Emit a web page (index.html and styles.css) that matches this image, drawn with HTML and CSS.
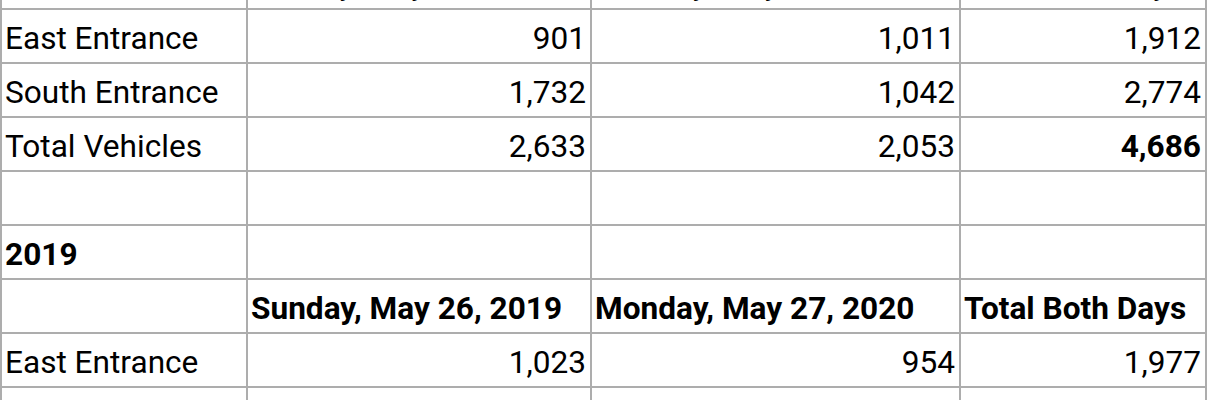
FILE: index.html
```html
<!DOCTYPE html>
<html lang="en">
<head>
<meta charset="utf-8">
<title>Vehicle counts</title>
<link rel="stylesheet" href="styles.css">
</head>
<body>
<div class="sheet">
  <div class="cell"></div>
  <div class="cell head">Sunday, May 24, 2020</div>
  <div class="cell head">Monday, May 25, 2020</div>
  <div class="cell head">Total Both Days</div>

  <div class="cell">East Entrance</div>
  <div class="cell num">901</div>
  <div class="cell num">1,011</div>
  <div class="cell num">1,912</div>

  <div class="cell">South Entrance</div>
  <div class="cell num">1,732</div>
  <div class="cell num">1,042</div>
  <div class="cell num">2,774</div>

  <div class="cell">Total Vehicles</div>
  <div class="cell num">2,633</div>
  <div class="cell num">2,053</div>
  <div class="cell num bold">4,686</div>

  <div class="cell"></div>
  <div class="cell"></div>
  <div class="cell"></div>
  <div class="cell"></div>

  <div class="cell bold">2019</div>
  <div class="cell"></div>
  <div class="cell"></div>
  <div class="cell"></div>

  <div class="cell"></div>
  <div class="cell bold">Sunday, May 26, 2019</div>
  <div class="cell bold">Monday, May 27, 2020</div>
  <div class="cell bold">Total Both Days</div>

  <div class="cell">East Entrance</div>
  <div class="cell num">1,023</div>
  <div class="cell num">954</div>
  <div class="cell num">1,977</div>

  <div class="cell">South Entrance</div>
  <div class="cell num">1,611</div>
  <div class="cell num">1,002</div>
  <div class="cell num">2,613</div>
</div>
</body>
</html>
```
FILE: styles.css
```css
html, body {
  margin: 0;
  padding: 0;
  background: #ffffff;
  overflow: hidden;
}

.sheet {
  display: grid;
  grid-template-columns: 244px 342px 367px 244px;
  grid-auto-rows: 52px;
  gap: 2px;
  padding: 2px;
  background: #adadad;
  width: max-content;
  margin-top: -46px;
  font-family: Roboto, "Noto Sans", sans-serif;
  font-size: 31.6px;
  color: #000000;
}

.cell {
  background: #ffffff;
  display: flex;
  align-items: flex-end;
  padding: 0 4px 5px 3px;
  line-height: normal;
  white-space: nowrap;
  overflow: hidden;
}

.num {
  justify-content: flex-end;
}

.bold {
  font-weight: 700;
}
```
